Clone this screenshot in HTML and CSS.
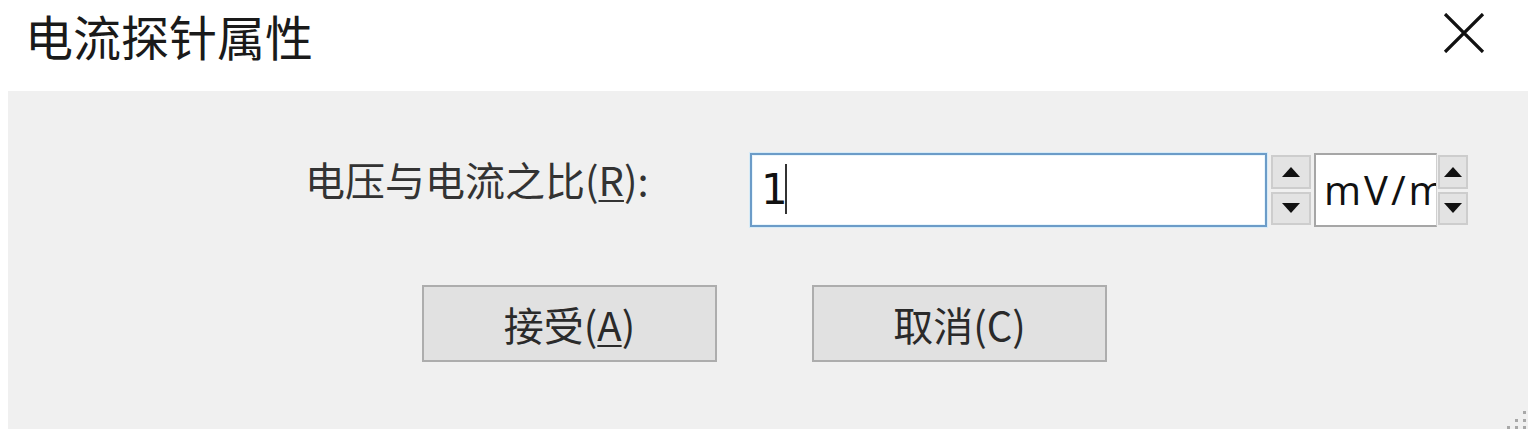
FILE: index.html
```html
<!DOCTYPE html>
<html lang="zh-CN">
<head>
<meta charset="utf-8">
<title>电流探针属性</title>
<link rel="stylesheet" href="styles.css">
</head>
<body>
<div class="dialog">
  <div class="titlebar">
    <div class="title">电流探针属性</div>
    <div class="close">
      <svg width="42" height="40" viewBox="0 0 42 40"><path d="M2 1 L40 39 M40 1 L2 39" stroke="#111" stroke-width="3.2" fill="none"/></svg>
    </div>
  </div>
  <div class="panel">
    <div class="row">
      <div class="label">电压与电流之比(<u>R</u>):</div>
      <div class="input"><span class="value">1</span><span class="caret"></span></div>
      <div class="spin wide">
        <div class="spin-btn"><svg width="18" height="10" viewBox="0 0 18 10"><path d="M9 0 L18 10 L0 10 Z" fill="#111"/></svg></div>
        <div class="spin-btn"><svg width="18" height="10" viewBox="0 0 18 10"><path d="M0 0 L18 0 L9 10 Z" fill="#111"/></svg></div>
      </div>
      <div class="unit"><span>mV/mA</span></div>
      <div class="spin narrow">
        <div class="spin-btn"><svg width="18" height="10" viewBox="0 0 18 10"><path d="M9 0 L18 10 L0 10 Z" fill="#111"/></svg></div>
        <div class="spin-btn"><svg width="18" height="10" viewBox="0 0 18 10"><path d="M0 0 L18 0 L9 10 Z" fill="#111"/></svg></div>
      </div>
    </div>
    <div class="buttons">
      <div class="btn">接受(<u>A</u>)</div>
      <div class="btn">取消(C)</div>
    </div>
    <svg class="grip" width="20" height="20" viewBox="0 0 20 20">
      <rect x="16" y="2" width="3" height="3" fill="#a8a8a8"/>
      <rect x="8" y="10" width="3" height="3" fill="#a8a8a8"/>
      <rect x="16" y="10" width="3" height="3" fill="#a8a8a8"/>
      <rect x="0" y="17" width="3" height="3" fill="#a8a8a8"/>
      <rect x="8" y="17" width="3" height="3" fill="#a8a8a8"/>
      <rect x="16" y="17" width="3" height="3" fill="#a8a8a8"/>
    </svg>
  </div>
</div>
</body>
</html>
```
FILE: styles.css
```css
html, body {
  margin: 0;
  padding: 0;
  background: #ffffff;
}
.dialog {
  width: 1533px;
  height: 429px;
  overflow: hidden;
  font-family: "Noto Sans", "Noto Sans CJK SC", sans-serif;
}
.titlebar {
  height: 91px;
  display: flex;
  justify-content: space-between;
  align-items: flex-start;
  box-sizing: border-box;
}
.title {
  margin-left: 25px;
  margin-top: 11px;
  font-family: "Noto Sans CJK SC", sans-serif;
  font-size: 48px;
  line-height: 48px;
  color: #1a1a1a;
}
.close {
  margin-top: 13px;
  margin-right: 48px;
  width: 42px;
  height: 40px;
}
.close svg {
  display: block;
}
.panel {
  position: relative;
  margin-left: 8px;
  width: 1520px;
  height: 338px;
  background: #f0f0f0;
  box-sizing: border-box;
  padding-top: 62px;
}
.row {
  display: flex;
  align-items: center;
  height: 74px;
}
.label {
  margin-left: 297px;
  width: 445px;
  font-family: "Noto Sans CJK SC", sans-serif;
  font-size: 40px;
  line-height: 48px;
  color: #333333;
  margin-top: -22px;
}
.label u, .btn u {
  text-decoration-thickness: 2px;
  text-underline-offset: 4px;
}
.input {
  width: 517px;
  height: 74px;
  box-sizing: border-box;
  background: #ffffff;
  border: 2px solid #6c9cc8;
  box-shadow: 0 0 0 1px #d6ebf7, inset 0 0 0 1px #eaf6fc;
  display: flex;
  align-items: center;
  padding-left: 9px;
}
.value {
  font-family: "DejaVu Sans", sans-serif;
  font-size: 42px;
  line-height: 48px;
  letter-spacing: -4px;
  color: #111;
}
.caret {
  width: 2px;
  height: 50px;
  background: #333;
  margin-left: 1px;
  margin-top: -2px;
}
.spin {
  display: flex;
  flex-direction: column;
  gap: 3px;
  height: 70px;
  margin-left: 4px;
}
.spin.wide {
  width: 40px;
}
.spin.narrow {
  width: 30px;
  margin-left: 1px;
}
.spin-btn {
  flex: 1;
  background: #e3e3e3;
  border: 2px solid #cdcdcd;
  box-sizing: border-box;
  display: flex;
  align-items: center;
  justify-content: center;
}
.spin-btn svg {
  display: block;
}
.unit {
  width: 123px;
  height: 74px;
  box-sizing: border-box;
  margin-left: 3px;
  background: #ffffff;
  border: 2px solid #a6a6a6;
  border-right: 1px solid #d0d0d0;
  overflow: hidden;
  white-space: nowrap;
  display: flex;
  align-items: center;
  padding-left: 8px;
}
.unit span {
  font-family: "Open Sans", sans-serif;
  font-size: 40px;
  line-height: 48px;
  letter-spacing: 3px;
  color: #111;
}
.buttons {
  display: flex;
  gap: 95px;
  margin-left: 414px;
  margin-top: 58px;
}
.btn {
  width: 295px;
  height: 77px;
  box-sizing: border-box;
  background: #e1e1e1;
  border: 2px solid #adadad;
  display: flex;
  align-items: center;
  justify-content: center;
  font-family: "Noto Sans CJK SC", sans-serif;
  font-size: 40px;
  line-height: 48px;
  color: #2a2a2a;
}
.grip {
  position: absolute;
  right: 1px;
  bottom: 0;
}
```
